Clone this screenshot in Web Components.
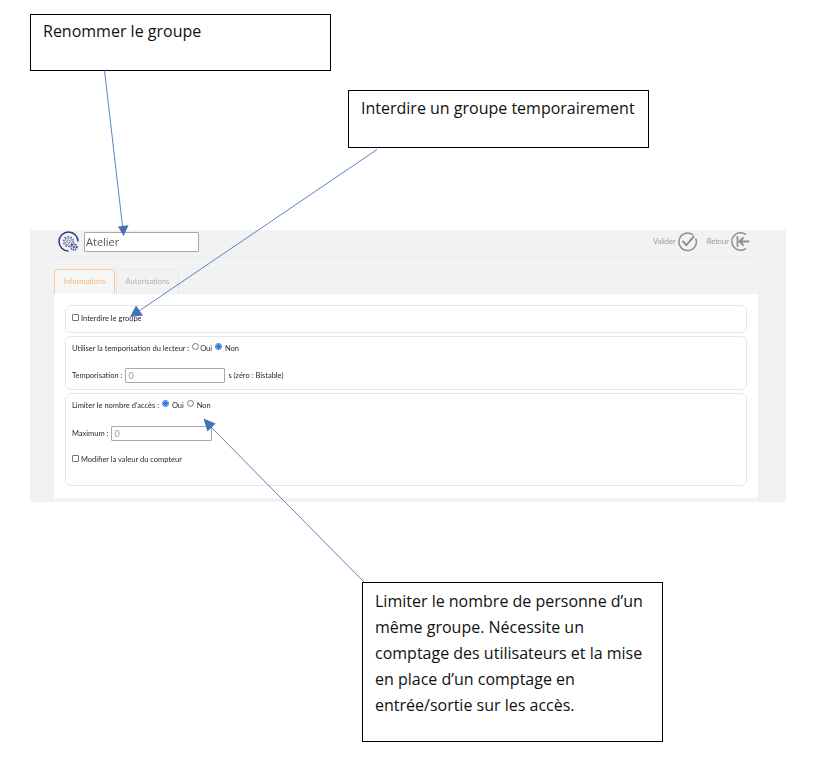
<!DOCTYPE html>
<html lang="fr"><head><meta charset="utf-8"><title>Groupe</title>
<style>
html,body{margin:0;padding:0;background:#fff}
body{width:815px;height:763px;overflow:hidden;font-family:"Open Sans","Noto Sans",sans-serif}
</style></head>
<body>
<doc-canvas>
  <group-panel name="Atelier"></group-panel>
  <call-out style="left:30px;top:14px;width:301px;height:57px" pad="6px 12px">Renommer le groupe</call-out>
  <call-out style="left:348px;top:90px;width:301px;height:58px" pad="7px 12px">Interdire un groupe temporairement</call-out>
  <call-out style="left:362px;top:582px;width:301px;height:160px" pad="5px 12px" lh="26px">Limiter le nombre de personne d’un même groupe. Nécessite un comptage des utilisateurs et la mise en place d’un comptage en entrée/sortie sur les accès.</call-out>
  <arrow-layer></arrow-layer>
</doc-canvas>
<script>
const def=(n,html)=>{customElements.define(n,class extends HTMLElement{
  constructor(){super();this.attachShadow({mode:'open'});}
  connectedCallback(){this.shadowRoot.innerHTML=typeof html==='function'?html(this):html;}
});};
def('doc-canvas',`<style>:host{display:block;position:relative;width:815px;height:763px;padding:230px 29px 0 30px;box-sizing:border-box}</style><slot></slot>`);
def('call-out',h=>`<style>:host{display:block;position:absolute;box-sizing:border-box;border:1px solid #000;background:#fff;color:#111;font:16px/20px "Open Sans","Noto Sans",sans-serif;padding:${h.getAttribute('pad')};line-height:${h.getAttribute('lh')||'20px'}}</style><slot></slot>`);
def('arrow-layer',`<style>:host{display:block;position:absolute;inset:0;pointer-events:none}svg{display:block}</style>
<svg width="815" height="763" viewBox="0 0 815 763" fill="#4472b4" stroke="none">
<g stroke="#5585c4" stroke-width="1" fill="none"><path d="M104.500 70.500L122.500 226"/><path d="M377 149.500L139 311"/><path d="M364 582L211 427"/></g>
<path d="M123.600 236L118 226.500L128.500 225.300Z"/>
<path d="M130 317L136 305.500L143 315.500Z"/>
<path d="M203.500 418.500L215.500 423.500L207.500 431.500Z"/>
</svg>`);
def('rad-io',h=>{const on=h.hasAttribute('checked');return `<style>:host{display:inline-block;width:7px;height:7px;box-sizing:border-box;border-radius:50%;border:1px solid ${on?'#2a78e4':'#777'};background:${on?'radial-gradient(circle,#2a78e4 0 2px,#fff 2.4px)':'#fff'};vertical-align:1px;margin:0 1px}</style>`});
def('check-box',`<style>:host{display:inline-block;width:7px;height:7px;box-sizing:border-box;border:1px solid #777;border-radius:1px;background:#fff;margin-right:2px;vertical-align:0}</style>`);
def('text-box',h=>`<style>:host{display:inline-block;box-sizing:border-box;height:15px;width:${h.getAttribute('w')}px;border:1px solid #a9a9a9;border-radius:1px;background:#fff;color:#999;padding:0 2px;line-height:14px;font-size:9px;vertical-align:middle}</style><slot></slot>`);
def('form-card',h=>`<style>:host{display:block;box-sizing:border-box;height:${h.getAttribute('h')}px;border:1px solid #e6e6e6;border-radius:6px;background:#fff;padding:0 6px;color:#2a2a2a}
</style><slot></slot>`);
def('form-row',h=>`<style>:host{display:flex;align-items:center;height:${h.getAttribute('h')||14}px;margin-top:${h.getAttribute('mt')||0}px;white-space:pre;gap:3px}</style><slot></slot>`);
def('tool-btn',h=>`<style>:host{display:inline-flex;align-items:center;gap:1px;color:#999}svg{display:block}</style><slot></slot>
<svg width="21" height="21" viewBox="0 0 21 21" fill="none" stroke="#8e8e8e" stroke-width="1.500" stroke-linecap="round" stroke-linejoin="round">${h.getAttribute('icon')==='check'
?'<path d="M15.800 3.800A8.700 8.700 0 1 0 18.900 8"/><path d="M6 10.500l3.300 3.600L16.500 5.800" stroke-width="2"/>'
:'<path d="M15.500 3.200A8.800 8.800 0 1 0 15.500 17.800"/><path d="M7.500 6v9" stroke-width="1.800"/><path d="M18.500 10.500H9.500M13 7l-3.500 3.500L13 14" stroke-width="1.800"/>'}</svg>`);
def('group-icon',`<style>:host{display:block;width:22px;height:22px}svg{display:block}</style>
<svg width="22" height="22" viewBox="0 0 22 22" fill="none" stroke="#2b3a8c">
<path d="M20 10.500A9.500 9.500 0 1 0 10.500 20" stroke-width="1.500"/>
<circle cx="10.500" cy="10.500" r="1.700" stroke-width=".9" stroke="#5a6499"/>
<circle cx="10.500" cy="10.500" r="5" stroke-width="1.400" stroke-dasharray="1.700 1.400" stroke="#6a739f"/>
<circle cx="10.500" cy="10.500" r="3.800" stroke-width=".8" stroke="#6a739f"/>
<circle cx="16" cy="16" r="2.900" stroke-width="1.500" stroke-dasharray="1.300 .8"/>
<circle cx="16" cy="16" r="1" stroke-width="1"/>
</svg>`);
def('tab-item',h=>{const a=h.hasAttribute('active');return `<style>:host{display:block;box-sizing:border-box;height:25px;width:${h.getAttribute('w')}px;border:1px solid ${a?'#f7cf9e':'#e8e8e8'};border-bottom:0;border-radius:4px 4px 0 0;color:${a?'#f5b77f':'#b0b0b0'};text-align:center;line-height:24px;background:${a?'#f6f6f6':'#f2f2f2'}}</style><slot></slot>`});
def('group-panel',h=>`<style>
:host{display:block;box-sizing:border-box;width:756px;height:272px;background:#f2f2f2;font:7.500px/12px Lato,"Open Sans",sans-serif;color:#2a2a2a;filter:blur(.3px)}
.head{display:flex;align-items:center;height:28px;margin:0 35px 0 24px;border-bottom:1px solid #e8e8e8;box-sizing:border-box;padding:0 0 4px 4px;gap:4px}
.name{box-sizing:border-box;width:115px;height:20px;border:1px solid #aaa;background:#fff;font:11px/18px "Open Sans",sans-serif;padding:0 1px;color:#555;border-radius:1px}
.sp{flex:1}
.tools{display:flex;gap:9px}
.tabs{display:flex;gap:1px;margin:11px 0 0 24px}
.body{box-sizing:border-box;margin:0 28px 0 24px;width:704px;height:204px;background:#fff;padding:11px 11px 0;display:flex;flex-direction:column;gap:3px}
</style>
<div class="head"><group-icon></group-icon><div class="name">${h.getAttribute('name')}</div><div class="sp"></div>
<div class="tools"><tool-btn icon="check">Valider</tool-btn><tool-btn icon="back">Retour</tool-btn></div></div>
<div class="tabs"><tab-item active w="61">Informations</tab-item><tab-item w="63">Autorisations</tab-item></div>
<div class="body">
<form-card h="28"><form-row h="25"><span><check-box></check-box>Interdire le groupe</span></form-row></form-card>
<form-card h="54"><form-row h="12" mt="6"><span>Utiliser la temporisation du lecteur : <rad-io></rad-io>Oui <rad-io checked></rad-io> Non</span></form-row>
<form-row h="15" mt="13"><span>Temporisation :</span><text-box w="100">0</text-box><span>s (zéro : Bistable)</span></form-row></form-card>
<form-card h="93"><form-row h="12" mt="6"><span>Limiter le nombre d'accès : <rad-io checked></rad-io> Oui <rad-io></rad-io> Non</span></form-row>
<form-row h="15" mt="14"><span>Maximum :</span><text-box w="101">0</text-box></form-row>
<form-row h="13" mt="12.500"><span><check-box></check-box>Modifier la valeur du compteur</span></form-row></form-card>
</div>`);
</script>
</body></html>
